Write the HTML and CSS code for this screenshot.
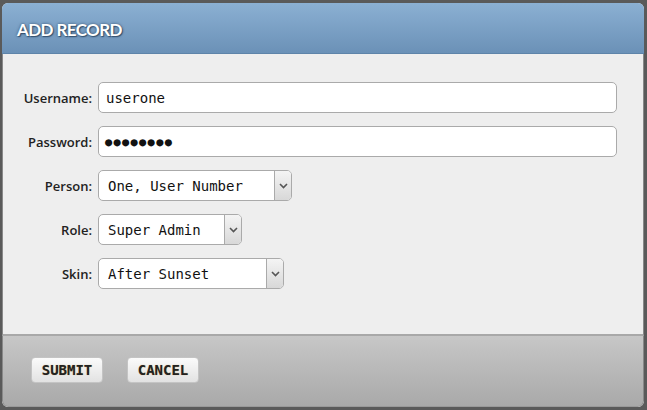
FILE: index.html
```html
<!DOCTYPE html>
<html>
<head>
<meta charset="utf-8">
<link rel="stylesheet" href="styles.css">
</head>
<body>
<div class="dialog">
  <div class="header"><h1 class="title">ADD RECORD</h1></div>
  <div class="content">
    <div class="form">
      <label class="label">Username:</label>
      <div class="field input">userone</div>
      <label class="label">Password:</label>
      <div class="field input pass">&#9679;&#9679;&#9679;&#9679;&#9679;&#9679;&#9679;&#9679;</div>
      <label class="label">Person:</label>
      <div class="field select w-person"><span class="value">One, User Number</span><span class="arrow"><svg width="9" height="6" viewBox="0 0 9 6"><path d="M1 1 L4.5 4.5 L8 1" fill="none" stroke="#555" stroke-width="1.6"/></svg></span></div>
      <label class="label">Role:</label>
      <div class="field select w-role"><span class="value">Super Admin</span><span class="arrow"><svg width="9" height="6" viewBox="0 0 9 6"><path d="M1 1 L4.5 4.5 L8 1" fill="none" stroke="#555" stroke-width="1.6"/></svg></span></div>
      <label class="label">Skin:</label>
      <div class="field select w-skin"><span class="value">After Sunset</span><span class="arrow"><svg width="9" height="6" viewBox="0 0 9 6"><path d="M1 1 L4.5 4.5 L8 1" fill="none" stroke="#555" stroke-width="1.6"/></svg></span></div>
    </div>
  </div>
  <div class="footer">
    <button class="btn">SUBMIT</button>
    <button class="btn">CANCEL</button>
  </div>
</div>
</body>
</html>
```
FILE: styles.css
```css
html, body { margin: 0; padding: 0; }
body {
  background: #5a5a5a;
  width: 647px;
  height: 410px;
  padding: 3px 3px 3px 2px;
  box-sizing: border-box;
  font-family: "Lato", "Liberation Sans", sans-serif;
}
.dialog {
  width: 642px;
  height: 404px;
  display: flex;
  flex-direction: column;
  border-radius: 6px;
  overflow: hidden;
  background: #eeeeee;
}
.header {
  height: 51px;
  background: linear-gradient(#8bb0d3, #6b91b7);
  border-bottom: 1px solid #5e84a9;
  box-sizing: border-box;
  display: flex;
  align-items: center;
  padding-left: 15px;
  padding-top: 2px;
}
.title {
  margin: 0;
  color: #fff;
  font-size: 17px;
  letter-spacing: -0.6px;
  font-weight: 700;
  text-shadow: 0 0 3px #34506e, 1px 1px 1px #34506e;
}
.content {
  flex: 1;
  background: #eeeeee;
  border-left: 1px solid #888;
  border-right: 1px solid #888;
  border-bottom: 2px solid #a8a8a8;
  padding-top: 28px;
}
.form {
  display: grid;
  grid-template-columns: 89px auto;
  column-gap: 6px;
  row-gap: 13px;
  align-items: center;
  justify-items: start;
}
.label {
  justify-self: end;
  font-family: "Open Sans", "Lato", sans-serif;
  font-weight: 600;
  font-size: 13px;
  color: #222;
}
.field {
  height: 31px;
  box-sizing: border-box;
  background: #fff;
  border: 1px solid #aaa;
  border-radius: 5px;
  font-family: "DejaVu Sans Mono", monospace;
  font-size: 14px;
  color: #111;
  display: flex;
  align-items: center;
}
.input {
  width: 519px;
  padding-left: 7px;
}
.pass { font-size: 12px; letter-spacing: 1.3px; padding-left: 6px; }
.select { overflow: hidden; }
.value { flex: 1; padding-left: 9px; }
.arrow {
  width: 16px;
  align-self: stretch;
  border-left: 1px solid #aaa;
  background: linear-gradient(#f4f4f4, #d8d8d8);
  display: flex;
  align-items: center;
  justify-content: center;
}
.w-person { width: 194px; }
.w-role { width: 144px; }
.w-skin { width: 186px; }
.footer {
  height: 71px;
  box-sizing: border-box;
  background: linear-gradient(#c7c7c7, #a9a9a9);
  border-left: 1px solid #888;
  border-right: 1px solid #888;
  border-bottom: 1px solid #999;
  border-radius: 0 0 6px 6px;
  padding: 21px 0 0 28px;
  display: flex;
  align-items: flex-start;
  gap: 24px;
}
.btn {
  width: 72px;
  height: 26px;
  border: 1px solid #c4c4c4;
  border-radius: 4px;
  background: linear-gradient(#fbfbfb, #e2e2e2);
  font-family: "DejaVu Sans Mono", monospace;
  font-weight: bold;
  font-size: 14px;
  color: #222;
  text-shadow: 0 0 1px #c8a060;
  padding: 0;
}
```
